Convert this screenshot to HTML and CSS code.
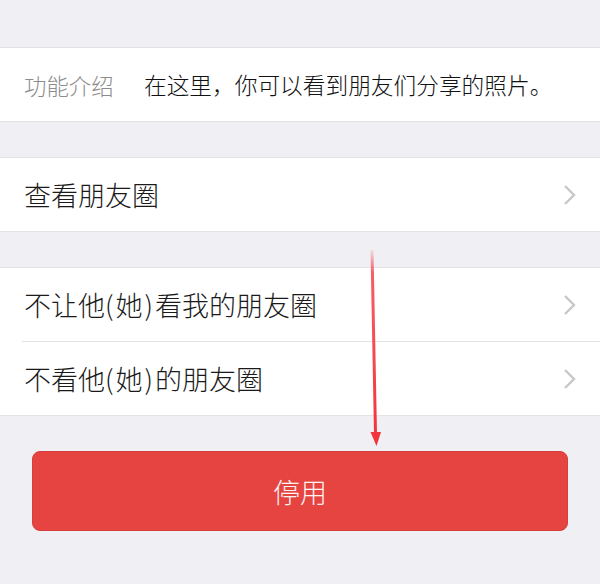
FILE: index.html
```html
<!DOCTYPE html>
<html lang="zh-CN">

<head>
    <meta charset="UTF-8">
    <meta name="viewport" content="width=device-width, initial-scale=1.0">
    <title>朋友圈</title>
    <link rel="stylesheet" href="styles.css">
</head>

<body>
    <div class="page">
        <!-- Intro -->
        <div class="group first">
            <div class="row">
                <span class="label">功能介绍</span>
                <span class="desc">在这里，你可以看到朋友们分享的照片。</span>
            </div>
        </div>

        <div class="group">
            <div class="row">
                <span class="title">查看朋友圈</span>
                <svg class="chevron" width="13" height="22" viewBox="0 0 13 22">
                    <polyline points="2,2 11,11 2,20" />
                </svg>
            </div>
        </div>

        <div class="group">
            <div class="row">
                <span class="title">不让他<span class="paren">(她)</span>看我的朋友圈</span>
                <svg class="chevron" width="13" height="22" viewBox="0 0 13 22">
                    <polyline points="2,2 11,11 2,20" />
                </svg>
            </div>
            <div class="row">
                <span class="title">不看他<span class="paren">(她)</span>的朋友圈</span>
                <svg class="chevron" width="13" height="22" viewBox="0 0 13 22">
                    <polyline points="2,2 11,11 2,20" />
                </svg>
            </div>
        </div>

        <div class="actions">
            <button class="stop-button">停用</button>
        </div>

        <!-- Annotation arrow -->
        <svg class="arrow" width="20" height="200" viewBox="0 0 20 200">
            <defs>
                <linearGradient id="fade" x1="0" y1="0" x2="0" y2="1">
                    <stop offset="0" stop-color="#f5424a" stop-opacity="0.1" />
                    <stop offset="0.12" stop-color="#f5424a" stop-opacity="0.85" />
                    <stop offset="1" stop-color="#f2343c" stop-opacity="1" />
                </linearGradient>
            </defs>
            <line x1="4" y1="0" x2="7.5" y2="184" stroke="url(#fade)" stroke-width="3" />
            <polygon points="2.5,182 13,182 8.5,196" fill="#f2343c" />
        </svg>
    </div>
</body>

</html>
```

FILE: styles.css
```css
* {
    margin: 0;
    padding: 0;
    box-sizing: border-box;
}

body,
html {
    height: 100%;
    background-color: #efeff4;
    font-family: "Noto Sans CJK SC", "Noto Sans", sans-serif;
    font-weight: 300;
    color: #1a1a1a;
}

.page {
    position: relative;
    padding-top: 47px;
}

/* Groups of rows */
.group {
    background-color: #fff;
    border-top: 1px solid #e3e3e6;
    border-bottom: 1px solid #e3e3e6;
    margin-top: 35px;
}

.group.first {
    margin-top: 0;
}

.row {
    display: flex;
    align-items: center;
    height: 73px;
    padding: 0 24px;
    position: relative;
}

.row + .row {
    border-top: 1px solid #e3e3e6;
    margin-left: 22px;
    padding-left: 2px;
    height: 74px;
}

.label {
    width: 120px;
    flex-shrink: 0;
    font-size: 22.4px;
    color: #8c8c8c;
}

.desc {
    font-size: 22.7px;
    color: #111;
}

.title {
    flex: 1;
    font-size: 27px;
    color: #1a1a1a;
}

.paren {
    letter-spacing: 2px;
}

.chevron polyline {
    fill: none;
    stroke: #c7c7cc;
    stroke-width: 2.4;
}

/* Stop button */
.actions {
    padding: 35px 32px 0;
}

.stop-button {
    width: 100%;
    height: 80px;
    background-color: #e54441;
    border: 1px solid #d63f3c;
    border-radius: 8px;
    color: #fdf2f2;
    font-family: inherit;
    font-weight: 300;
    font-size: 27px;
    cursor: pointer;
}

/* Red annotation arrow */
.arrow {
    position: absolute;
    top: 250px;
    left: 368px;
}
```
